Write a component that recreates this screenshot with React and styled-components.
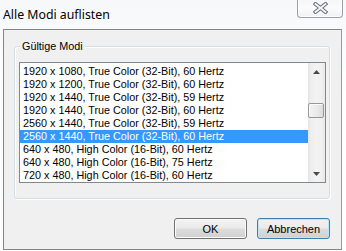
import React from 'react';
import styled, { createGlobalStyle } from 'styled-components';

const GlobalStyle = createGlobalStyle`
  html, body {
    margin: 0;
    padding: 0;
    background: #ffffff;
  }
  body {
    font-family: 'Liberation Sans', Arial, sans-serif;
    font-size: 10.8px;
    color: #000;
  }
`;

const Window = styled.div`
  width: 346px;
  height: 251px;
  box-sizing: border-box;
  padding: 0 4px 1px 3px;
  display: flex;
  flex-direction: column;
  background: linear-gradient(180deg, #f6f8fa 0%, #ffffff 40%, #ffffff 100%);
  overflow: hidden;
`;

const TitleBar = styled.div`
  height: 29px;
  flex: none;
  display: flex;
  justify-content: space-between;
  align-items: flex-start;
`;

const Title = styled.div`
  font-family: 'Noto Sans', 'Open Sans', sans-serif;
  font-size: 12.3px;
  line-height: 16px;
  padding-top: 7px;
  color: #000;
  text-shadow: 0 0 6px #fff;
`;

const CloseButton = styled.div`
  width: 46px;
  height: 19px;
  margin-top: -1px;
  margin-right: -1px;
  box-sizing: border-box;
  border: 1px solid #9c9fa4;
  border-top: none;
  border-radius: 0 0 4px 4px;
  background: linear-gradient(180deg, #f4f5f6 0%, #fbfbfc 50%, #f0f1f3 100%);
  box-shadow: inset 0 0 0 1px rgba(255, 255, 255, 0.8);
  display: flex;
  align-items: center;
  justify-content: center;
`;

const Client = styled.div`
  flex: 1;
  display: flex;
  flex-direction: column;
  background: #f0f0f0;
  border: 1px solid #858585;
  border-right-color: #9a9a9a;
  padding: 16px 11px 10px 10px;
  min-height: 0;
`;

const GroupBox = styled.div`
  position: relative;
  height: 153px;
  box-sizing: border-box;
  border: 1px solid #d5dfe5;
  border-radius: 3px;
  box-shadow: inset 1px 1px 0 #fff, 1px 1px 0 #fff;
  padding: 15px 3px 15px 4px;
`;

const Legend = styled.span`
  position: absolute;
  top: -7px;
  left: 5px;
  padding: 0 2px;
  line-height: 13px;
  background: #f0f0f0;
`;

const ListBox = styled.div`
  height: 121px;
  box-sizing: border-box;
  border: 1px solid #828790;
  background: #fff;
  display: flex;
`;

const Rows = styled.div`
  flex: 1;
  padding-top: 2px;
  overflow: hidden;
`;

const Row = styled.div`
  height: 13px;
  line-height: 13px;
  padding-left: 3px;
  white-space: nowrap;
  background: ${(p) => (p.$selected ? '#3399ff' : 'transparent')};
  color: ${(p) => (p.$selected ? '#fff' : '#000')};
`;

const ScrollBar = styled.div`
  width: 17px;
  flex: none;
  display: flex;
  flex-direction: column;
  background: linear-gradient(90deg, #e3e3e3 0%, #eeeeee 15%, #f3f3f3 50%, #eeeeee 85%, #e6e6e6 100%);
`;

const ArrowButton = styled.div`
  height: 17px;
  flex: none;
  display: flex;
  align-items: center;
  justify-content: center;
`;

const Track = styled.div`
  flex: 1;
  padding-top: ${(p) => p.$offset}px;
`;

const Thumb = styled.div`
  height: 15px;
  margin: 0 1px 0 0;
  box-sizing: border-box;
  border: 1px solid #979797;
  border-radius: 2px;
  background: linear-gradient(90deg, #f2f2f2 0%, #ececec 50%, #dcdcdc 100%);
  box-shadow: inset 1px 1px 0 #fbfbfb;
`;

const ButtonRow = styled.div`
  display: flex;
  justify-content: flex-end;
  gap: 10px;
  margin-top: 19px;
`;

const Button = styled.button`
  width: 73px;
  height: 21px;
  box-sizing: border-box;
  padding: 0;
  font-family: 'Liberation Sans', Arial, sans-serif;
  font-size: 11px;
  color: #000;
  border: 1px solid ${(p) => (p.$focused ? '#3c7fb1' : '#707070')};
  border-radius: 3px;
  background: linear-gradient(180deg, #f2f2f2 0%, #ebebeb 48%, #dddddd 52%, #cfcfcf 100%);
  box-shadow: inset 0 0 0 1px ${(p) => (p.$focused ? '#bde4fb' : '#fcfcfc')};
`;

const modes = [
  '1920 x 1080, True Color (32-Bit), 60 Hertz',
  '1920 x 1200, True Color (32-Bit), 60 Hertz',
  '1920 x 1440, True Color (32-Bit), 59 Hertz',
  '1920 x 1440, True Color (32-Bit), 60 Hertz',
  '2560 x 1440, True Color (32-Bit), 59 Hertz',
  '2560 x 1440, True Color (32-Bit), 60 Hertz',
  '640 x 480, High Color (16-Bit), 60 Hertz',
  '640 x 480, High Color (16-Bit), 75 Hertz',
  '720 x 480, High Color (16-Bit), 60 Hertz',
];

const CloseIcon = () => (
  <svg width="15" height="12" viewBox="0 0 15 12">
    <path d="M2.5 2 L12.5 10 M12.5 2 L2.5 10" stroke="#6a7078" strokeWidth="3.8" strokeLinecap="square" />
    <path d="M2.5 2 L12.5 10 M12.5 2 L2.5 10" stroke="#f6f7f9" strokeWidth="1.8" strokeLinecap="square" />
  </svg>
);

const Arrow = ({ down }) => (
  <svg width="7" height="4" viewBox="0 0 7 4">
    <path d={down ? 'M0 0 H7 L3.5 4 Z' : 'M0 4 H7 L3.5 0 Z'} fill="#4a4a4a" />
  </svg>
);

const App = () => {
  const selected = 5;

  return (
    <>
      <GlobalStyle />
      <Window>
        <TitleBar>
          <Title>Alle Modi auflisten</Title>
          <CloseButton>
            <CloseIcon />
          </CloseButton>
        </TitleBar>
        <Client>
          <GroupBox>
            <Legend>Gültige Modi</Legend>
            <ListBox>
              <Rows>
                {modes.map((m, i) => (
                  <Row key={i} $selected={i === selected}>
                    {m}
                  </Row>
                ))}
              </Rows>
              <ScrollBar>
                <ArrowButton>
                  <Arrow />
                </ArrowButton>
                <Track $offset={23}>
                  <Thumb />
                </Track>
                <ArrowButton>
                  <Arrow down />
                </ArrowButton>
              </ScrollBar>
            </ListBox>
          </GroupBox>
          <ButtonRow>
            <Button>OK</Button>
            <Button $focused>Abbrechen</Button>
          </ButtonRow>
        </Client>
      </Window>
    </>
  );
};

export default App;
